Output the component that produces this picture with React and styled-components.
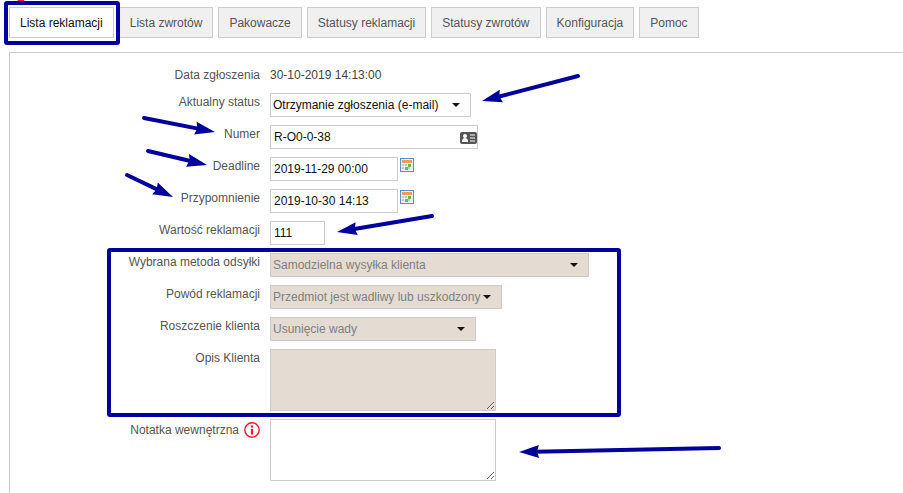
import React from "react";
import styled, { createGlobalStyle } from "styled-components";

const GlobalStyle = createGlobalStyle`
  html, body {
    margin: 0;
    background: #fff;
    overflow: hidden;
  }
  body {
    font-family: "Liberation Sans", Arial, sans-serif;
    font-size: 12px;
  }
`;

const Page = styled.div`
  position: relative;
  width: 903px;
  height: 493px;
  overflow: hidden;
  padding-top: 7px;
  box-sizing: border-box;
`;

const Tabs = styled.div`
  display: flex;
  gap: 5px;
  padding-left: 9px;
`;

const Tab = styled.div`
  display: flex;
  align-items: center;
  height: 31px;
  box-sizing: border-box;
  padding: 0 10px;
  border: 1px solid #ccc;
  background: ${(p) => (p.$active ? "#fff" : "#f0f0f0")};
  color: ${(p) => (p.$active ? "#111" : "#555")};
`;

const Panel = styled.div`
  margin: 14px 0 0 9px;
  padding-top: 15px;
  border-top: 1px solid #ccc;
  border-left: 1px solid #ccc;
  height: 430px;
  display: flex;
  flex-direction: column;
  gap: 8px;
`;

const Row = styled.div`
  display: grid;
  grid-template-columns: 250px auto;
  column-gap: 10px;
  justify-content: start;
  align-items: start;
  min-height: ${(p) => p.$min || "auto"};
`;

const Label = styled.div`
  display: flex;
  justify-content: flex-end;
  align-items: center;
  gap: 5px;
  color: #555;
  line-height: 14px;
  padding-top: ${(p) => p.$top ?? 2}px;
`;

const Value = styled.div`
  color: #444;
  line-height: 14px;
`;

const Field = styled.div`
  display: flex;
  align-items: flex-start;
  gap: 2px;
`;

const InputBox = styled.div`
  position: relative;
  width: ${(p) => p.$width}px;
`;

const TextInput = styled.input`
  display: block;
  width: 100%;
  height: 24px;
  box-sizing: border-box;
  padding: 0 3px;
  border: 1px solid #ccc;
  outline: none;
  background: #fff;
  color: #111;
  font: 12px "Liberation Sans", Arial, sans-serif;
`;

const CardIcon = styled.svg`
  position: absolute;
  right: 1px;
  top: 7px;
`;

const CalendarSvg = styled.svg`
  flex: none;
  margin-top: 1px;
`;

const InfoSvg = styled.svg`
  flex: none;
`;

const SelectBox = styled.div`
  position: relative;
  width: ${(p) => p.$width}px;

  &::after {
    content: "";
    position: absolute;
    right: 11px;
    top: 10px;
    border-left: 4px solid transparent;
    border-right: 4px solid transparent;
    border-top: 4px solid #111;
    pointer-events: none;
  }
`;

const Select = styled.select`
  display: block;
  width: 100%;
  height: 24px;
  box-sizing: border-box;
  appearance: none;
  padding: 0 2px;
  border: 1px solid #ccc;
  border-radius: 0;
  outline: none;
  opacity: 1;
  background: ${(p) => (p.disabled ? "#e4dcd3" : "#fff")};
  color: ${(p) => (p.disabled ? "#808080" : "#111")};
  font: 12px "Liberation Sans", Arial, sans-serif;
`;

const TextArea = styled.textarea`
  display: block;
  width: 226px;
  height: 62px;
  box-sizing: border-box;
  padding: 3px;
  margin: 0;
  border: 1px solid #ccc;
  border-radius: 0;
  outline: none;
  background: ${(p) => (p.disabled ? "#e4dcd3" : "#fff")};
  font: 12px "Liberation Sans", Arial, sans-serif;
`;

const Annotations = styled.svg`
  position: absolute;
  left: 0;
  top: 0;
  pointer-events: none;
`;

const NAVY = "#00009c";

function Arrow({ tail, tip, width = 13, length = 20 }) {
  const dx = tip[0] - tail[0];
  const dy = tip[1] - tail[1];
  const d = Math.hypot(dx, dy);
  const ux = dx / d;
  const uy = dy / d;
  const bx = tip[0] - ux * length;
  const by = tip[1] - uy * length;
  const nx = -uy * (width / 2);
  const ny = ux * (width / 2);
  return (
    <g>
      <line x1={tail[0]} y1={tail[1]} x2={bx + ux * 4} y2={by + uy * 4} stroke={NAVY} strokeWidth="4" strokeLinecap="round" />
      <polygon
        points={`${tip[0]},${tip[1]} ${bx + nx},${by + ny} ${bx + ux * 2},${by + uy * 2} ${bx - nx},${by - ny}`}
        fill={NAVY}
      />
    </g>
  );
}

function CalendarIcon() {
  return (
    <CalendarSvg width="14" height="14" viewBox="0 0 14 14">
      <rect x="0.5" y="0.5" width="13" height="13" fill="#e8f0fa" stroke="#5f8fc8" />
      <rect x="2" y="2" width="10" height="3" fill="#f59b4c" />
      <g fill="#b9c6dc">
        <rect x="2" y="6" width="2" height="2" />
        <rect x="5" y="6" width="2" height="2" />
        <rect x="2" y="9" width="2" height="2" />
        <rect x="8" y="9" width="2" height="2" />
      </g>
      <rect x="8" y="6" width="3" height="3" fill="#6fb35b" />
      <rect x="5" y="9" width="3" height="3" fill="#6fb35b" />
    </CalendarSvg>
  );
}

function InfoIcon() {
  return (
    <InfoSvg width="16" height="16" viewBox="0 0 16 16">
      <circle cx="8" cy="8" r="7.2" fill="#fff" stroke="#e8192c" strokeWidth="1.4" />
      <rect x="6.9" y="3.4" width="2.2" height="2.2" fill="#e8192c" />
      <rect x="6.9" y="6.8" width="2.2" height="5.8" fill="#e8192c" />
    </InfoSvg>
  );
}

const tabs = [
  "Lista reklamacji",
  "Lista zwrotów",
  "Pakowacze",
  "Statusy reklamacji",
  "Statusy zwrotów",
  "Konfiguracja",
  "Pomoc",
];

const arrows = [
  { tail: [578, 76], tip: [482, 101] },
  { tail: [144, 118], tip: [215, 132] },
  { tail: [148, 151], tip: [207, 165] },
  { tail: [127, 175], tip: [173, 197] },
  { tail: [432, 216], tip: [337, 232] },
  { tail: [719, 448], tip: [519, 452] },
];

function DropDown({ width, value, disabled }) {
  return (
    <SelectBox $width={width}>
      <Select disabled={disabled} defaultValue={value}>
        <option>{value}</option>
      </Select>
    </SelectBox>
  );
}

export default function App() {
  return (
    <Page>
      <GlobalStyle />
      <Tabs>
        {tabs.map((t, i) => (
          <Tab key={t} $active={i === 0}>
            {t}
          </Tab>
        ))}
      </Tabs>

      <Panel>
        <Row $min="17px">
          <Label $top={0}>Data zgłoszenia</Label>
          <Value>30-10-2019 14:13:00</Value>
        </Row>
        <Row>
          <Label>Aktualny status</Label>
          <DropDown width={201} value="Otrzymanie zgłoszenia (e-mail)" />
        </Row>
        <Row>
          <Label>Numer</Label>
          <InputBox $width={208}>
            <TextInput defaultValue="R-O0-0-38" />
            <CardIcon width="17" height="12" viewBox="0 0 17 12">
              <rect width="17" height="12" rx="2" fill="#555" />
              <circle cx="5" cy="4" r="2" fill="#fff" />
              <path d="M2 10c0-3 1.2-4 3-4s3 1 3 4z" fill="#fff" />
              <path d="M10 3h5M10 6h5M10 9h5" stroke="#fff" strokeWidth="1.2" />
            </CardIcon>
          </InputBox>
        </Row>
        <Row>
          <Label>Deadline</Label>
          <Field>
            <InputBox $width={128}>
              <TextInput defaultValue="2019-11-29 00:00" />
            </InputBox>
            <CalendarIcon />
          </Field>
        </Row>
        <Row>
          <Label>Przypomnienie</Label>
          <Field>
            <InputBox $width={128}>
              <TextInput defaultValue="2019-10-30 14:13" />
            </InputBox>
            <CalendarIcon />
          </Field>
        </Row>
        <Row>
          <Label>Wartość reklamacji</Label>
          <InputBox $width={55}>
            <TextInput defaultValue="111" />
          </InputBox>
        </Row>
        <Row>
          <Label>Wybrana metoda odsyłki</Label>
          <DropDown width={319} value="Samodzielna wysyłka klienta" disabled />
        </Row>
        <Row>
          <Label>Powód reklamacji</Label>
          <DropDown width={232} value="Przedmiot jest wadliwy lub uszkodzony" disabled />
        </Row>
        <Row>
          <Label>Roszczenie klienta</Label>
          <DropDown width={206} value="Usunięcie wady" disabled />
        </Row>
        <Row>
          <Label>Opis Klienta</Label>
          <TextArea disabled />
        </Row>
        <Row>
          <Label $top={3}>
            Notatka wewnętrzna
            <InfoIcon />
          </Label>
          <TextArea />
        </Row>
      </Panel>

      <Annotations width="903" height="493" viewBox="0 0 903 493">
        <circle cx="21" cy="-2" r="4" fill="#e8192c" />
        <rect x="6" y="3" width="112" height="40" rx="1" fill="none" stroke={NAVY} strokeWidth="4" />
        <rect x="109" y="250" width="510" height="165" rx="1" fill="none" stroke={NAVY} strokeWidth="4" />
        {arrows.map((a) => (
          <Arrow key={a.tip.join()} {...a} />
        ))}
      </Annotations>
    </Page>
  );
}
